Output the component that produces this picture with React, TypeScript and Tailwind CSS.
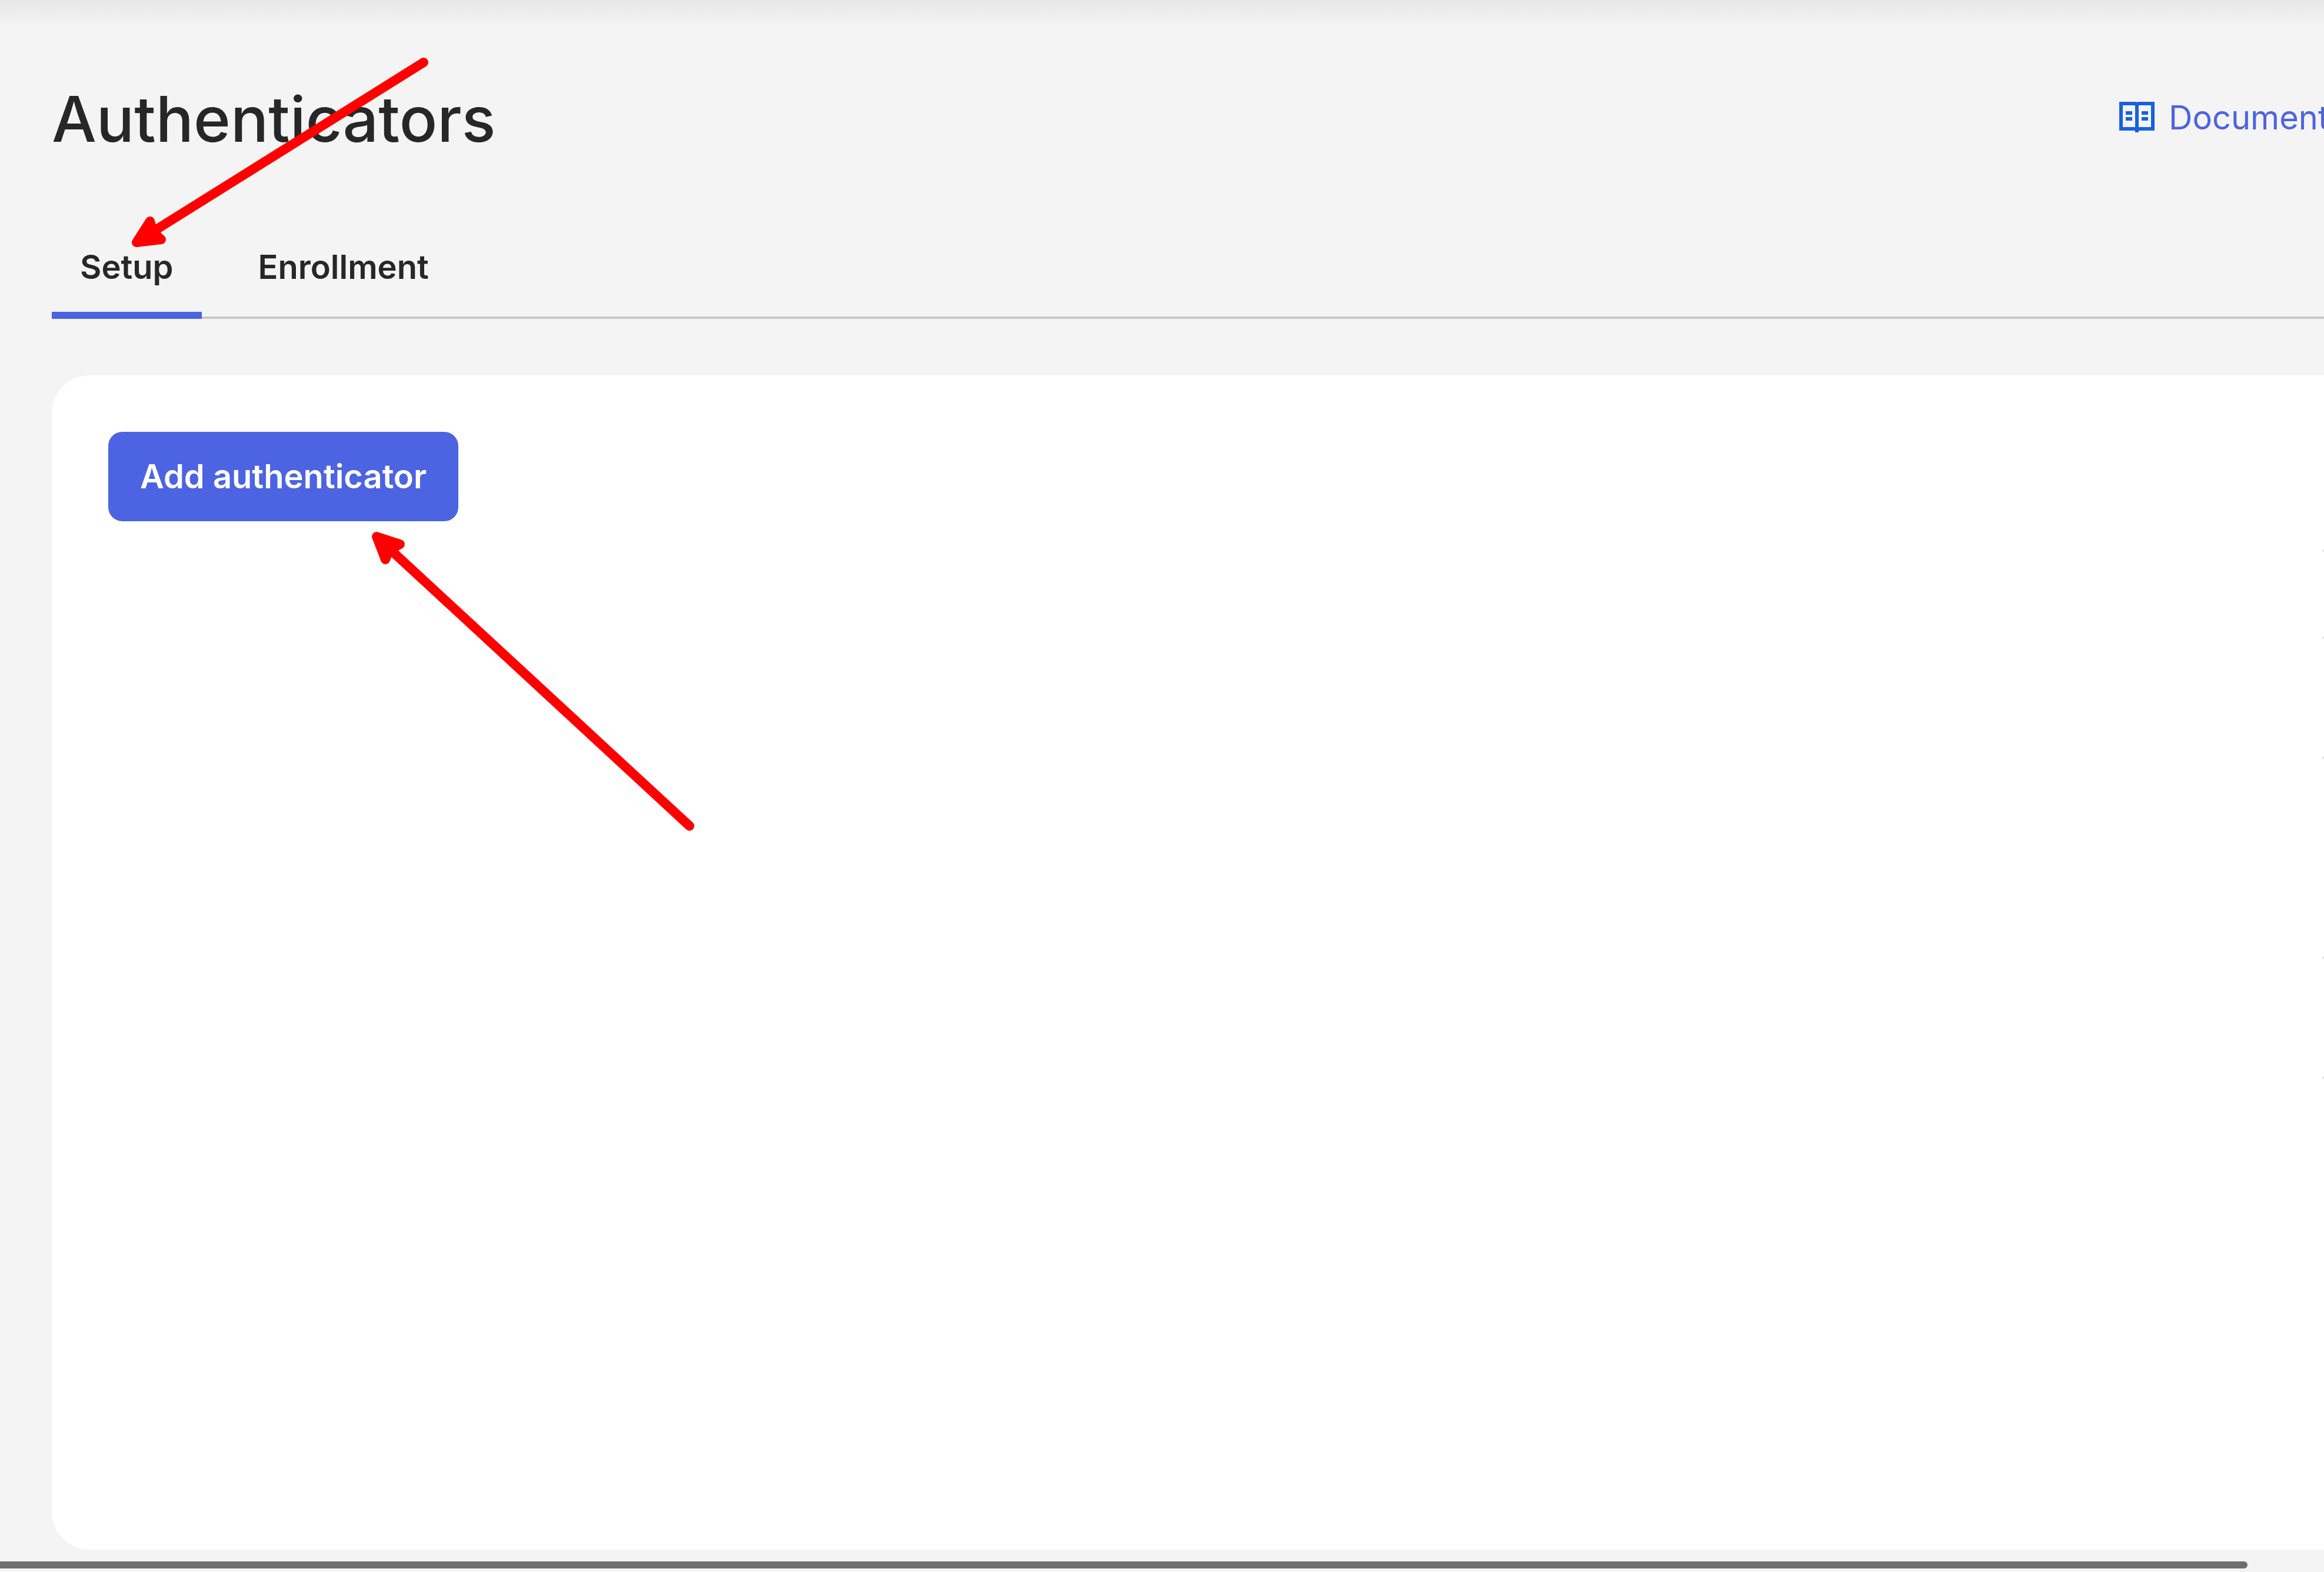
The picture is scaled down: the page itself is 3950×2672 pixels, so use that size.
function BookIcon() {
  return (
    <svg viewBox="0 0 60 54" className="h-[54px] w-[60px] shrink-0" fill="none" stroke="#1662dd" strokeWidth="6" aria-hidden="true">
      <path d="M3 3H25C28 3 30 4 30 5C30 4 32 3 35 3H57V46H35C32 46 30 47 30 49C30 47 28 46 25 46H3Z" />
      <path d="M30 4V52M11 19H22M11 29H22M38 19H49M38 29H49" />
    </svg>
  );
}

// Heights of the rows in the side table, of which only the leading rule shows.
const rows = ["h-[148px]", "h-[204px]", "h-[340px]", "h-[204px]", "h-[4px]"];

function Arrows() {
  return (
    <svg
      className="pointer-events-none absolute left-0 top-0 h-[1440px] w-[1240px]"
      viewBox="0 0 1240 1440"
      fill="red"
      stroke="red"
      strokeWidth="16"
      strokeLinecap="round"
      strokeLinejoin="round"
      aria-hidden="true"
    >
      <path d="M720 106L250 400" />
      <path d="M232 412L255 376L260 394L274 407Z" />
      <path d="M1172 1404L660 931" />
      <path d="M640 912L680 925L662 934L655 951Z" />
    </svg>
  );
}

export default function App() {
  return (
    <div className="relative flex min-h-screen flex-col overflow-hidden bg-[#f4f4f4] font-['Inter',sans-serif] text-[#272727]">
      <div className="pointer-events-none absolute inset-x-0 top-0 h-12 bg-linear-to-b from-[#e8e8e8] to-[#f4f4f4]" />

      <header className="relative flex items-end justify-between pl-[88px] pt-[138px]">
        <h1 className="text-[107px] font-medium leading-[128px]">Authenticators</h1>
        <a href="#documentation" className="mb-7 flex w-[348px] items-center gap-6 whitespace-nowrap text-[56px] leading-[76px] text-[#4c64e1]">
          <BookIcon />
          Documentation
        </a>
      </header>

      <div role="tablist" className="ml-[88px] mt-[134px] flex h-[142px] items-end border-b-4 border-[#c8c8c8] text-[56px] font-semibold leading-[72px]">
        <button type="button" role="tab" aria-selected="true" className="-mb-1 border-b-12 border-[#4c64e1] px-12 pb-[40px]">
          Setup
        </button>
        <button type="button" role="tab" aria-selected="false" className="-mb-1 ml-12 border-b-12 border-transparent px-12 pb-[40px]">
          Enrollment
        </button>
      </div>

      <main className="ml-[88px] mt-24 flex flex-1 flex-col rounded-l-[64px] bg-white pl-24 pt-24">
        <button type="button" className="self-start rounded-[24px] bg-[#4c64e1] px-[54px] py-10 text-[56px] font-semibold leading-[72px] text-white">
          Add authenticator
        </button>
        <ul className="mt-12 w-[2px] self-end">
          {rows.map((height, i) => (
            <li key={i} className={`${height} border-t-4 border-[#e0e0e0]`} />
          ))}
        </ul>
      </main>

      <div className="mt-5 flex h-[18px] items-start pr-[130px]">
        <div className="h-3 flex-1 rounded-r-full bg-[#6f6f6f]" />
      </div>

      <Arrows />
    </div>
  );
}
